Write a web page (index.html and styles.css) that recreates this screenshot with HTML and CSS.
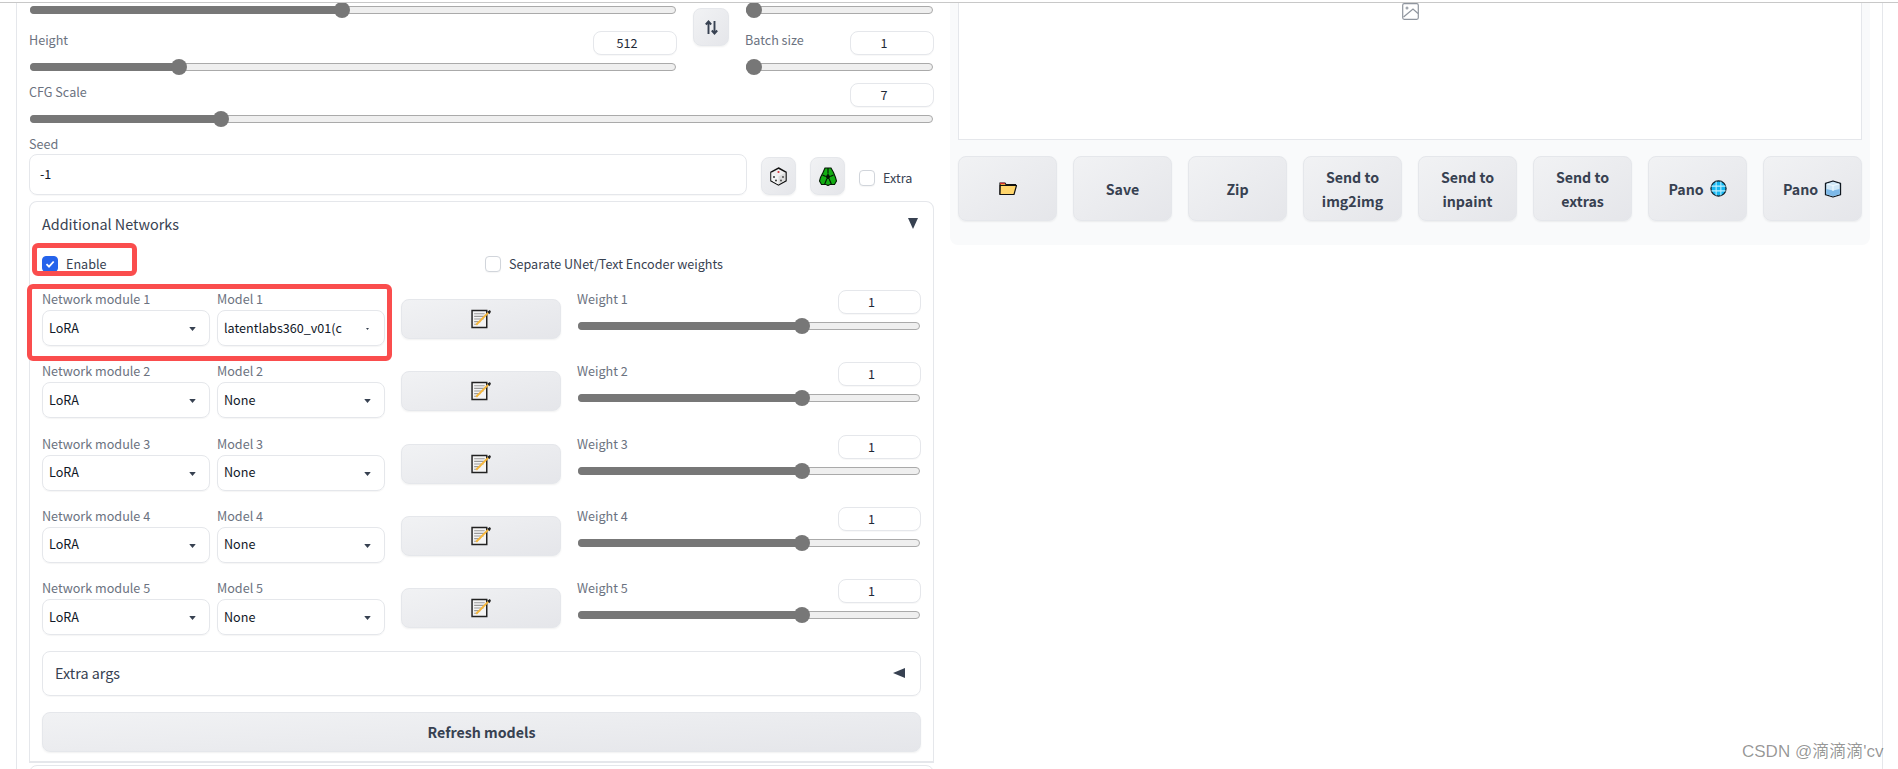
FILE: index.html
```html
<!DOCTYPE html>
<html lang="en">
<head>
<meta charset="utf-8">
<title>Additional Networks</title>
<link rel="stylesheet" href="styles.css">
</head>
<body>
<svg class="defs" width="0" height="0" aria-hidden="true">
  <symbol id="memo" viewBox="0 0 20 19">
    <path d="M1 1.500h14v16H1z" fill="#f4f4f4" stroke="#222" stroke-width="1.400"/>
    <path d="M3 4.500h10M3 7h10M3 9.500h9M3 12h6M3 14.500h3" stroke="#9a9a9a" stroke-width="1"/>
    <path d="M5 15 16.500 3.500" stroke="#f6b73c" stroke-width="1.800"/>
    <path d="M15.500 2.500 18 1l1 1.500-1.500 2.500z" fill="#222"/>
  </symbol>
  <symbol id="tri" viewBox="0 0 10 6"><path d="M0 0h10L5 6z" fill="#374151"/></symbol>
</svg>
<div class="topline"></div>
<div class="page">
  <div class="columns">
    <main class="left">
      <div class="size-grid">
        <div class="stack">
          <div class="track first"><div class="fill" style="width:48.45%"></div></div>
          <div class="field">
            <div class="field-head"><span class="label">Height</span><span class="num num-wide">512</span></div>
            <div class="track"><div class="fill" style="width:23.2%"></div></div>
          </div>
        </div>
        <button class="btn swap" type="button" aria-label="Swap">
          <svg width="13" height="15" viewBox="0 0 13 15"><path d="M3.500 14V2M.8 4.500 3.500 1.500l2.700 3M9.500 1v12M6.800 10.500l2.700 3 2.700-3" fill="none" stroke="#374151" stroke-width="1.900"/></svg>
        </button>
        <div class="stack">
          <div class="track first"><div class="fill" style="width:4.25%"></div></div>
          <div class="field">
            <div class="field-head"><span class="label">Batch size</span><span class="num num-wide">1</span></div>
            <div class="track"><div class="fill" style="width:4.25%"></div></div>
          </div>
        </div>
      </div>

      <div class="field cfg">
        <div class="field-head"><span class="label">CFG Scale</span><span class="num num-wide">7</span></div>
        <div class="track"><div class="fill" style="width:21.15%"></div></div>
      </div>

      <div class="label seed-label">Seed</div>
      <div class="seed-row">
        <div class="seed-input">-1</div>
        <button class="btn icon-btn" type="button" aria-label="Random seed">
          <svg width="17" height="19" viewBox="0 0 17 19"><path d="M8.500 1 16 5.200v8.600L8.500 18 1 13.800V5.200z" fill="#f0f0f0" stroke="#111" stroke-width="1.500"/><path d="M1.500 5.500 8.500 9.500l7-4V13.500L8.500 17.500 1.500 13.500z" fill="#dcdcdc"/><path d="M1.500 5.500 8.500 9.500V17.500L1.500 13.500z" fill="#f4f4f4"/><circle cx="8.500" cy="5" r="1.100" fill="#d8343c"/><circle cx="4" cy="10" r=".9" fill="#222"/><circle cx="6" cy="13.500" r=".9" fill="#222"/><circle cx="13" cy="10" r=".9" fill="#444"/><circle cx="11" cy="13.500" r=".9" fill="#444"/></svg>
        </button>
        <button class="btn icon-btn" type="button" aria-label="Reuse seed">
          <svg width="18" height="19" viewBox="0 0 18 19"><path d="M6 1h6l2.500 4.500 2 5 1 3.500-2 3.500H11l-2 1-2-1H2.500L.5 14l1-3.500 2.500-5z" fill="#12ad12" stroke="#041a04" stroke-width="1.100"/><path d="M6.800 9.500 9 6.500l2.200 3-1 2.500H7.800z" fill="#051505"/><path d="M9 1v5.500M3.500 8l3.300 1.500M14.500 8l-3.300 1.500M7.800 12 5.500 17.500M10.200 12 12.500 17.500" fill="none" stroke="#051505" stroke-width="1.100"/></svg>
        </button>
        <label class="check extra"><span class="box"></span><span>Extra</span></label>
      </div>

      <section class="panel">
        <header class="panel-head"><span>Additional Networks</span><span class="arrow-down"></span></header>
        <div class="options">
          <label class="check"><span class="box on"><svg width="12" height="12" viewBox="0 0 12 12"><path d="M2.500 6.200 5 8.700l4.700-5.200" fill="none" stroke="#fff" stroke-width="1.800"/></svg></span><span>Enable</span></label>
          <label class="check"><span class="box"></span><span>Separate UNet/Text Encoder weights</span></label>
        </div>

        <div class="nets">
          <div class="net">
            <div class="sel-col"><div class="label">Network module 1</div><div class="select"><span>LoRA</span><svg class="tri" viewBox="0 0 10 6"><use href="#tri"/></svg></div></div>
            <div class="sel-col"><div class="label">Model 1</div><div class="select"><span>latentlabs360_v01(c</span><svg class="tri tiny" viewBox="0 0 10 6"><use href="#tri"/></svg></div></div>
            <button class="btn memo" type="button" aria-label="Edit"><svg width="21" height="20"><use href="#memo"/></svg></button>
            <div class="weight"><div class="field-head"><span class="label">Weight 1</span><span class="num num-w">1</span></div><div class="track"><div class="fill" style="width:65.8%"></div></div></div>
          </div>
          <div class="net">
            <div class="sel-col"><div class="label">Network module 2</div><div class="select"><span>LoRA</span><svg class="tri" viewBox="0 0 10 6"><use href="#tri"/></svg></div></div>
            <div class="sel-col"><div class="label">Model 2</div><div class="select"><span>None</span><svg class="tri" viewBox="0 0 10 6"><use href="#tri"/></svg></div></div>
            <button class="btn memo" type="button" aria-label="Edit"><svg width="21" height="20"><use href="#memo"/></svg></button>
            <div class="weight"><div class="field-head"><span class="label">Weight 2</span><span class="num num-w">1</span></div><div class="track"><div class="fill" style="width:65.8%"></div></div></div>
          </div>
          <div class="net">
            <div class="sel-col"><div class="label">Network module 3</div><div class="select"><span>LoRA</span><svg class="tri" viewBox="0 0 10 6"><use href="#tri"/></svg></div></div>
            <div class="sel-col"><div class="label">Model 3</div><div class="select"><span>None</span><svg class="tri" viewBox="0 0 10 6"><use href="#tri"/></svg></div></div>
            <button class="btn memo" type="button" aria-label="Edit"><svg width="21" height="20"><use href="#memo"/></svg></button>
            <div class="weight"><div class="field-head"><span class="label">Weight 3</span><span class="num num-w">1</span></div><div class="track"><div class="fill" style="width:65.8%"></div></div></div>
          </div>
          <div class="net">
            <div class="sel-col"><div class="label">Network module 4</div><div class="select"><span>LoRA</span><svg class="tri" viewBox="0 0 10 6"><use href="#tri"/></svg></div></div>
            <div class="sel-col"><div class="label">Model 4</div><div class="select"><span>None</span><svg class="tri" viewBox="0 0 10 6"><use href="#tri"/></svg></div></div>
            <button class="btn memo" type="button" aria-label="Edit"><svg width="21" height="20"><use href="#memo"/></svg></button>
            <div class="weight"><div class="field-head"><span class="label">Weight 4</span><span class="num num-w">1</span></div><div class="track"><div class="fill" style="width:65.8%"></div></div></div>
          </div>
          <div class="net">
            <div class="sel-col"><div class="label">Network module 5</div><div class="select"><span>LoRA</span><svg class="tri" viewBox="0 0 10 6"><use href="#tri"/></svg></div></div>
            <div class="sel-col"><div class="label">Model 5</div><div class="select"><span>None</span><svg class="tri" viewBox="0 0 10 6"><use href="#tri"/></svg></div></div>
            <button class="btn memo" type="button" aria-label="Edit"><svg width="21" height="20"><use href="#memo"/></svg></button>
            <div class="weight"><div class="field-head"><span class="label">Weight 5</span><span class="num num-w">1</span></div><div class="track"><div class="fill" style="width:65.8%"></div></div></div>
          </div>
        </div>

        <div class="extra-args"><span>Extra args</span><span class="arrow-left"></span></div>
        <button class="btn refresh" type="button">Refresh models</button>
      </section>
      <div class="next-panel"></div>
    </main>

    <aside class="right">
      <div class="image-box">
        <svg width="17" height="17" viewBox="0 0 17 17"><rect x=".7" y=".7" width="15.600" height="15.600" rx="1.500" fill="none" stroke="#8f959e" stroke-width="1.200"/><circle cx="5" cy="5" r="1.500" fill="#a3a8b0"/><path d="M1.500 14 11 6l5 4.500" fill="none" stroke="#8f959e" stroke-width="1.200"/></svg>
      </div>
      <div class="actions">
        <button class="btn act" type="button" aria-label="Open folder">
          <svg width="18" height="15" viewBox="0 0 18 15"><path d="M1 13.500V2h5l1 1.500h9.500v2" fill="#e8a33a" stroke="#111" stroke-width="1.200"/><path d="M1 1.800h4.500l.8 1.200H1z" fill="#d33030"/><path d="M1 13.500 1.200 4.500H17.500L15 13.500z" fill="#ffd56b" stroke="#111" stroke-width="1.200"/></svg>
        </button>
        <button class="btn act" type="button">Save</button>
        <button class="btn act" type="button">Zip</button>
        <button class="btn act" type="button">Send to<br>img2img</button>
        <button class="btn act" type="button">Send to<br>inpaint</button>
        <button class="btn act" type="button">Send to<br>extras</button>
        <button class="btn act" type="button">Pano
          <svg width="17" height="17" viewBox="0 0 18 18"><circle cx="9" cy="9" r="8" fill="#12b5f0" stroke="#0b1b26" stroke-width="1.300"/><path d="M1.500 6.500h15M1.500 11.500h15M6.500 1.500v15M11.500 1.500v15" stroke="#bdf0ff" stroke-width="1.100"/></svg>
        </button>
        <button class="btn act" type="button">Pano
          <svg width="18" height="18" viewBox="0 0 18 18"><path d="M9 1 16.500 3.300v11.400L9 17 1.500 14.700V3.300z" fill="#cfe8f8" stroke="#101820" stroke-width="1.300" stroke-linejoin="round"/><path d="M2.200 9 9 10.500 15.800 9v5.300L9 16.300 2.200 14.300z" fill="#7db9e8"/><path d="M3 4 9 5.500 15 4M9 5.500V11" fill="none" stroke="#f2fbff" stroke-width="1"/></svg>
        </button>
      </div>
    </aside>
  </div>
</div>
<div class="mark mark-enable"></div>
<div class="mark mark-model"></div>
<div class="watermark">CSDN @滴滴滴'cv</div>
</body>
</html>
```

FILE: styles.css
```css
* { box-sizing: border-box; }
html, body { margin: 0; padding: 0; }
body {
  position: relative;
  height: 769px;
  overflow: hidden;
  background: #fff;
  color: #374151;
  font-family: "Noto Sans CJK SC", "Noto Sans", sans-serif;
  font-size: 12.6px;
  line-height: 20px;
}
.defs { position: absolute; }
.topline { height: 3px; border-bottom: 1px solid #c8c8c8; }
.page {
  margin: 0 15px 0 16px;
  height: 766px;
  border-left: 1px solid #e5e7eb;
  border-right: 1px solid #e5e7eb;
  padding: 0 12px;
  overflow: hidden;
}
.columns { display: grid; grid-template-columns: 905px 920px; column-gap: 16px; }

/* left column */
.left { display: flex; flex-direction: column; }
.size-grid { display: grid; grid-template-columns: 648px 36px 189px; column-gap: 16px; }
.stack { display: flex; flex-direction: column; }
.swap { width: 36px; height: 38px; margin-top: 5px; }
.field { display: flex; flex-direction: column; }
.field-head { display: flex; justify-content: space-between; align-items: flex-start; height: 24px; margin-bottom: 5px; }
.label { color: #6b7280; height: 19px; line-height: 17px; white-space: nowrap; }
.num {
  display: block;
  height: 24px;
  border: 1px solid #e5e7eb;
  border-radius: 8px;
  background: #fff;
  color: #1f2937;
  text-align: center;
  padding-right: 16px;
  line-height: 22px;
  box-shadow: 0 1px 1px rgba(0,0,0,.03);
}
.num-wide { width: 84px; }
.num-w { width: 83px; }

.track {
  position: relative;
  height: 8px;
  margin: 3px 1px 4px;
  border: 1px solid #aaa;
  border-radius: 4px;
  background: #efefef;
}
.track.first { margin-bottom: 17px; }
.fill {
  position: absolute;
  left: -1px;
  top: -1px;
  bottom: -1px;
  background: #777;
  border-radius: 4px 0 0 4px;
}
.fill::after {
  content: "";
  position: absolute;
  right: -8px;
  top: -4px;
  width: 16px;
  height: 16px;
  border-radius: 50%;
  background: #777;
}
.cfg { margin-top: 8px; }
.seed-label { margin-top: 8px; }
.seed-row { display: flex; align-items: flex-end; height: 41px; gap: 14px; }
.seed-input {
  width: 718px;
  height: 41px;
  border: 1px solid #e5e7eb;
  border-radius: 8px;
  padding: 0 10px;
  line-height: 37px;
  color: #111827;
  box-shadow: 0 1px 1px rgba(0,0,0,.03);
}
.btn {
  display: flex;
  align-items: center;
  justify-content: center;
  padding: 0;
  border: 1px solid #e5e7eb;
  border-radius: 8px;
  background: linear-gradient(to bottom right, #f1f2f4, #e5e6ea);
  box-shadow: 0 1px 2px rgba(0,0,0,.06);
  color: #374151;
  font-family: inherit;
  font-weight: 600;
  font-size: 14.2px;
  line-height: 24px;
}
.icon-btn { width: 35px; height: 38px; }
.check { display: flex; align-items: center; gap: 8px; color: #374151; }
.extra { height: 16px; margin-bottom: 9px; }
.box {
  display: flex;
  align-items: center;
  justify-content: center;
  width: 16px;
  height: 16px;
  border: 1px solid #d1d5db;
  border-radius: 4px;
  background: #fff;
  box-shadow: 0 1px 1px rgba(0,0,0,.04);
}
.box.on { background: #2563eb; border-color: #2563eb; }

.panel {
  margin-top: 6px;
  padding: 0 12px 9px;
  height: 562px;
  border: 1px solid #e5e7eb;
  border-bottom-width: 2px;
  border-radius: 8px 8px 0 0;
}
.panel-head {
  display: flex;
  justify-content: space-between;
  align-items: center;
  height: 45px;
  padding: 0 3px 2px 0;
  font-size: 14.4px;
}
.arrow-down { width: 0; height: 0; border-left: 5.500px solid transparent; border-right: 5.500px solid transparent; border-top: 11px solid #374151; }
.arrow-left { width: 0; height: 0; border-top: 5.500px solid transparent; border-bottom: 5.500px solid transparent; border-right: 12px solid #374151; }
.options { display: grid; grid-template-columns: 427px 1fr; column-gap: 16px; height: 34px; align-items: center; margin-bottom: 9px; }

.nets { display: flex; flex-direction: column; gap: 16.250px; }
.net { display: grid; grid-template-columns: 168px 168px 160px 344px; column-gap: 7px; height: 56px; align-items: center; }
.sel-col { display: flex; flex-direction: column; height: 56px; }
.sel-col .label { height: 20px; }
.select {
  display: flex;
  justify-content: space-between;
  align-items: center;
  height: 36px;
  padding: 0 13px 0 6px;
  border: 1px solid #e5e7eb;
  border-radius: 8px;
  color: #111827;
  white-space: nowrap;
  box-shadow: 0 1px 1px rgba(0,0,0,.04);
}
.select span { margin-top: -1px; }
.tri { width: 7px; height: 4px; margin-top: 2px; }
.tiny { width: 3px; height: 2px; margin-right: 2px; }
.memo { height: 40px; margin-left: 9px; width: 160px; margin-top: 2px; }
.weight { display: flex; flex-direction: column; align-self: start; margin-left: 18px; width: 344px; }

.extra-args {
  display: flex;
  justify-content: space-between;
  align-items: center;
  height: 45px;
  margin-top: 16px;
  padding: 0 15px 2px 12px;
  border: 1px solid #e5e7eb;
  border-radius: 8px;
  font-size: 14.4px;
  box-shadow: 0 1px 1px rgba(0,0,0,.03);
}
.refresh { width: 100%; height: 40px; margin-top: 16px; }
.next-panel { height: 20px; margin-top: 2px; border: 1px solid #e5e7eb; border-radius: 8px 8px 0 0; }

/* right column */
.right {
  height: 242px;
  padding: 0 8px;
  background: #f9fafb;
  border-radius: 0 0 8px 8px;
  display: flex;
  flex-direction: column;
}
.image-box {
  display: flex;
  justify-content: center;
  align-items: flex-start;
  height: 137px;
  background: #fff;
  border: 1px solid #e5e7eb;
  border-top: 0;
}
.actions { display: grid; grid-template-columns: repeat(8, 99px); column-gap: 16px; margin-top: 16px; }
.act { height: 65px; gap: 6px; text-align: center; }
.act svg { flex: none; }

/* annotations drawn over the screenshot */
.mark { position: absolute; border: 5px solid #fa4d4d; border-radius: 6px; }
.mark-enable { left: 32px; top: 243px; width: 105px; height: 33px; }
.mark-model { left: 27px; top: 284px; width: 365px; height: 77px; }
.watermark {
  position: absolute;
  left: 1742px;
  top: 741px;
  font-family: "Liberation Sans", "Noto Sans CJK SC", sans-serif;
  font-size: 17px;
  line-height: 22px;
  white-space: nowrap;
  color: rgba(0,0,0,.42);
}
```
